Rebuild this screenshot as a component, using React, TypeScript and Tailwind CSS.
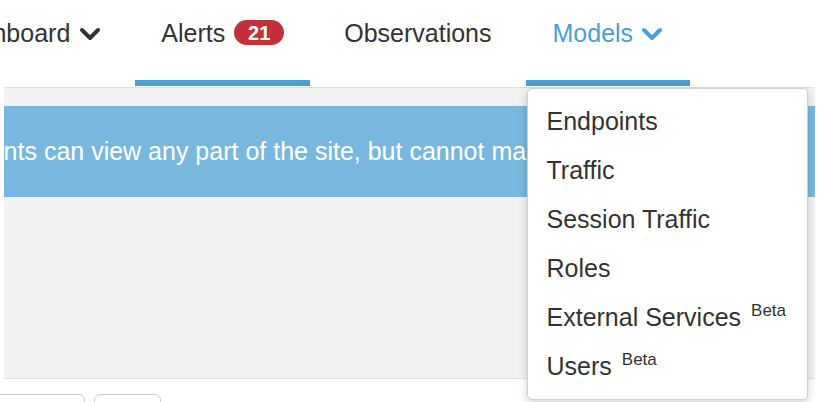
import { useState } from 'react';

const menuItems = [
  { label: 'Endpoints' },
  { label: 'Traffic' },
  { label: 'Session Traffic' },
  { label: 'Roles' },
  { label: 'External Services', beta: true },
  { label: 'Users', beta: true },
];

function Chevron({ className }: { className?: string }) {
  return (
    <svg viewBox="0 0 22 14" className={className} fill="none" stroke="currentColor" strokeWidth="4" strokeLinecap="round" strokeLinejoin="round">
      <polyline points="3,3 11,11 19,3" />
    </svg>
  );
}

export default function App() {
  const [open] = useState(true);

  return (
    <div className="w-[832px] h-[402px] overflow-hidden bg-white font-['Liberation_Sans',Arial,sans-serif] text-[#333]">
      {/* Top navigation */}
      <nav className="relative z-10 flex h-[87px] gap-2 ml-[-78px]">
        <div className="flex h-[86px] items-start px-[26px] pt-[18px]">
          <span className="text-[25px] leading-[30px]">Dashboard</span>
          <Chevron className="w-[22px] h-[14px] ml-[9px] mt-[9px] text-[#333]" />
        </div>

        <div className="flex h-[86px] items-start px-[26px] pt-[18px] border-b-[6px] border-[#48a1d8]">
          <span className="text-[25px] leading-[30px]">Alerts</span>
          <span className="ml-[9px] mt-[2px] flex h-[25px] w-[50px] items-center justify-center rounded-full bg-[#c3303a] text-[20px] font-bold text-white">
            21
          </span>
        </div>

        <div className="flex h-[86px] items-start px-[26px] pt-[18px]">
          <span className="text-[25px] leading-[30px]">Observations</span>
        </div>

        <div className="relative flex h-[86px] items-start px-[27px] pt-[18px] border-b-[6px] border-[#48a1d8] text-[#4a9fd6]">
          <span className="text-[25px] leading-[30px]">Models</span>
          <Chevron className="w-[22px] h-[14px] ml-[8px] mt-[9px]" />

          {open && (
            <div className="absolute left-[1px] top-[88px] w-[281px] h-[312px] rounded-[5px] border border-[#cfcfcf] bg-white shadow-[0_3px_10px_rgba(0,0,0,0.18)] pt-[8px] text-[#333]">
              {menuItems.map((item) => (
                <div key={item.label} className="flex h-[49px] items-center pl-[19px] text-[25px] whitespace-nowrap">
                  <span>{item.label}</span>
                  {item.beta && (
                    <span className="relative -top-[7px] ml-[10px] text-[17px]">Beta</span>
                  )}
                </div>
              ))}
            </div>
          )}
        </div>
      </nav>

      {/* Content */}
      <div className="ml-[4px] w-[811px]">
        <div className="h-[292px] border-t border-b border-[#e0e0e0] bg-[#f2f2f2] pt-[18px]">
          <div className="flex h-[91px] items-center overflow-hidden bg-[#79b8de]">
            <span className="ml-[-188px] whitespace-nowrap text-[25px] text-white">
              Read-only accounts can view any part of the site, but cannot make changes.
            </span>
          </div>
        </div>

        <div className="mt-[15px] flex gap-[9px] ml-[-40px]">
          <div className="h-[30px] w-[121px] rounded-[6px] border border-[#d0d0d0] bg-white" />
          <div className="h-[30px] w-[67px] rounded-[6px] border border-[#d0d0d0] bg-white" />
        </div>
      </div>
    </div>
  );
}
